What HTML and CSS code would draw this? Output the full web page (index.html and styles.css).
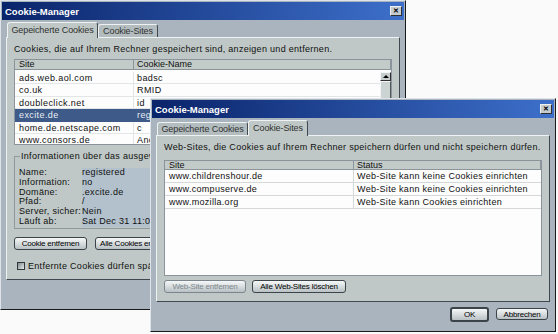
FILE: index.html
```html
<!DOCTYPE html>
<html lang="de">
<head>
    <meta charset="UTF-8">
    <title>Cookie-Manager</title>
    <link rel="stylesheet" href="styles.css">
</head>
<body>
    <div class="desktop">
        <!-- back window: stored cookies -->
        <div class="window back">
            <div class="titlebar">
                <span class="title">Cookie-Manager</span>
                <span class="close">&#10005;</span>
            </div>
            <div class="tabs">
                <div class="tab active">Gepeicherte Cookies</div>
                <div class="tab">Cookie-Sites</div>
            </div>
            <div class="panel">
                <p class="desc">Cookies, die auf Ihrem Rechner gespeichert sind, anzeigen und entfernen.</p>
                <div class="list list-cookies">
                    <div class="list-head">
                        <span class="col-a">Site</span>
                        <span class="col-b">Cookie-Name</span>
                    </div>
                    <div class="list-body">
                        <div class="rows">
                            <div class="row"><span class="col-a">ads.web.aol.com</span><span class="col-b">badsc</span></div>
                            <div class="row"><span class="col-a">co.uk</span><span class="col-b">RMID</span></div>
                            <div class="row"><span class="col-a">doubleclick.net</span><span class="col-b">id</span></div>
                            <div class="row selected"><span class="col-a">excite.de</span><span class="col-b">reg</span></div>
                            <div class="row"><span class="col-a">home.de.netscape.com</span><span class="col-b">c</span></div>
                            <div class="row"><span class="col-a">www.consors.de</span><span class="col-b">Anon</span></div>
                        </div>
                        <div class="scrollbar">
                            <div class="scroll-btn"></div>
                            <div class="scroll-thumb"></div>
                        </div>
                    </div>
                </div>
                <fieldset class="info">
                    <legend>Informationen über das ausgewählte Cookie</legend>
                    <div class="info-grid">
                        <span>Name:</span><span class="val">registered</span>
                        <span>Information:</span><span class="val">no</span>
                        <span>Domäne:</span><span class="val">.excite.de</span>
                        <span>Pfad:</span><span class="val">/</span>
                        <span>Server, sicher:</span><span class="val">Nein</span>
                        <span>Läuft ab:</span><span class="val">Sat Dec 31 11:00:00 2005</span>
                    </div>
                </fieldset>
                <div class="btn-row">
                    <button class="btn w74">Cookie entfernen</button>
                    <button class="btn">Alle Cookies entfernen</button>
                </div>
                <label class="check"><span class="box"></span>Entfernte Cookies dürfen später keine neuen setzen</label>
            </div>
            <div class="footer"></div>
        </div>

        <!-- front window: cookie sites -->
        <div class="window front">
            <div class="titlebar">
                <span class="title">Cookie-Manager</span>
                <span class="close">&#10005;</span>
            </div>
            <div class="tabs">
                <div class="tab">Gepeicherte Cookies</div>
                <div class="tab active">Cookie-Sites</div>
            </div>
            <div class="panel">
                <p class="desc">Web-Sites, die Cookies auf Ihrem Rechner speichern dürfen und nicht speichern dürfen.</p>
                <div class="list list-sites">
                    <div class="list-head">
                        <span class="col-a">Site</span>
                        <span class="col-b">Status</span>
                    </div>
                    <div class="list-body">
                        <div class="rows">
                            <div class="row"><span class="col-a">www.childrenshour.de</span><span class="col-b">Web-Site kann keine Cookies einrichten</span></div>
                            <div class="row"><span class="col-a">www.compuserve.de</span><span class="col-b">Web-Site kann keine Cookies einrichten</span></div>
                            <div class="row"><span class="col-a">www.mozilla.org</span><span class="col-b">Web-Site kann Cookies einrichten</span></div>
                        </div>
                    </div>
                </div>
                <div class="btn-row">
                    <button class="btn w82" disabled>Web-Site entfernen</button>
                    <button class="btn w94">Alle Web-Sites löschen</button>
                </div>
            </div>
            <div class="footer">
                <button class="btn ok">OK</button>
                <button class="btn cancel">Abbrechen</button>
            </div>
        </div>
    </div>
</body>
</html>
```

FILE: styles.css
```css
* {
    box-sizing: border-box;
}
body {
    margin: 0;
    background: #fafafa;
    font-family: "Liberation Sans", Arial, sans-serif;
    font-size: 9px;
    color: #101010;
}
.desktop {
    position: relative;
    width: 558px;
    height: 334px;
    overflow: hidden;
}
.window {
    position: absolute;
    display: flex;
    flex-direction: column;
    padding: 1px;
    background: #a9b4be;
    border: 1px solid;
    border-color: #dde3e8 #1a1a1a #1a1a1a #dde3e8;
}
.back {
    left: 0;
    top: 0;
    width: 406px;
    height: 310px;
}
.front {
    left: 150px;
    top: 98px;
    width: 406px;
    height: 234px;
}
.titlebar {
    height: 18px;
    display: flex;
    align-items: center;
    justify-content: space-between;
    padding: 0 2px 0 3px;
    background: linear-gradient(to right, #0a246a, #3d6fca);
}
.title {
    color: #fff;
    font-weight: bold;
    font-size: 9.5px;
}
.close {
    width: 12px;
    height: 10px;
    display: flex;
    align-items: center;
    justify-content: center;
    background: #c4ccd0;
    border: 1px solid;
    border-color: #f0f0f0 #303030 #303030 #f0f0f0;
    font-size: 7px;
    font-weight: bold;
    color: #000;
}
.tabs {
    display: flex;
    align-items: flex-end;
    height: 17px;
    padding-left: 5px;
}
.tab {
    height: 13px;
    line-height: 12px;
    text-align: center;
    white-space: nowrap;
    background: #b3bdbf;
    border: 1px solid #eef2f2;
    border-right-color: #404850;
    border-bottom: none;
    border-radius: 3px 3px 0 0;
    color: #303030;
    letter-spacing: -0.1px;
}
.tab:first-child { width: 91px; }
.tab:last-child { width: 60px; }
.tab.active {
    height: 16px;
    line-height: 15px;
    background: #bfc8c6;
    margin-bottom: -1px;
    position: relative;
    z-index: 1;
}
.panel {
    height: 243px;
    margin: 0 4px;
    padding: 6px 7px 0;
    background: #bfc8c6;
    border: 1px solid;
    border-color: #eef2f2 #404850 #404850 #eef2f2;
}
.front .panel {
    height: 167px;
}
.desc {
    margin: 0 0 5px;
    line-height: 10px;
    white-space: nowrap;
    letter-spacing: 0.3px;
}
.front .desc {
    margin-bottom: 8px;
}
.list {
    background: #fdfdfd;
    border: 1px solid #8a949a;
    display: flex;
    flex-direction: column;
    overflow: hidden;
}
.list-cookies {
    height: 86px;
}
.list-sites {
    height: 116px;
}
.list-head {
    display: flex;
    height: 10px;
    line-height: 9px;
    background: #c3cbc8;
    border-bottom: 1px solid #8a949a;
}
.list-head span {
    border-right: 1px solid #8a949a;
}
.list-sites .list-head {
    height: 9px;
    line-height: 8px;
}
.col-a {
    width: 119px;
    flex: none;
    padding-left: 4px;
    white-space: nowrap;
    overflow: hidden;
}
.col-b {
    flex: 1;
    padding-left: 3px;
    white-space: nowrap;
    overflow: hidden;
}
.list-sites .col-a {
    width: 189px;
}
.list-body {
    flex: 1;
    display: flex;
    min-height: 0;
}
.rows {
    flex: 1;
    padding-top: 2px;
    letter-spacing: 0.4px;
}
.row {
    display: flex;
    height: 12.4px;
    line-height: 12px;
    border-bottom: 1px solid #e2e6e6;
}
.row .col-a {
    border-right: 1px solid #e2e6e6;
}
.list-sites .rows {
    padding-top: 0;
    letter-spacing: 0.3px;
}
.list-sites .row {
    height: 13px;
    line-height: 13px;
    border-bottom-color: #d4d8d8;
}
.list-sites .row .col-a {
    border-right-color: #d4d8d8;
}
.row.selected {
    background: #3d5a88;
    color: #e8eef4;
    border-bottom-color: #3d5a88;
}
.row.selected .col-a {
    border-right-color: #3d5a88;
}
.scrollbar {
    width: 11px;
    margin-top: 2px;
    display: flex;
    flex-direction: column;
    background: #dfe3e3;
}
.scroll-btn {
    height: 9px;
    background: #c6cece;
    border: 1px solid;
    border-color: #f4f4f4 #303030 #303030 #f4f4f4;
    position: relative;
}
.scroll-btn::after {
    content: "";
    position: absolute;
    left: 2px;
    top: 2px;
    border-left: 3px solid transparent;
    border-right: 3px solid transparent;
    border-bottom: 3px solid #000;
}
.scroll-thumb {
    height: 40px;
    background: #ccd3d3;
    border: 1px solid;
    border-color: #f4f4f4 #505858 #505858 #f4f4f4;
}
.info {
    margin: 6px 0 0;
    padding: 0 0 3px 4px;
    height: 78px;
    border: 1px solid #909a9e;
}
.info legend {
    padding: 0 1px;
    margin-left: 1px;
    line-height: 10px;
    letter-spacing: 0.3px;
}
.info-grid {
    display: grid;
    grid-template-columns: 63px 1fr;
    margin-top: 7px;
    line-height: 9.8px;
    letter-spacing: 0.3px;
}
.info-grid .val {
    background: #b3c1cc;
}
.btn-row {
    display: flex;
    gap: 8px;
    margin-top: 8px;
}
.front .btn-row {
    margin-top: 4px;
    gap: 6px;
}
.btn {
    height: 13px;
    padding: 0 4px;
    font-family: "Liberation Sans", Arial, sans-serif;
    font-size: 8px;
    letter-spacing: -0.2px;
    color: #000;
    background: linear-gradient(#f6f8f8, #b9c1c4);
    border: 1px solid #3c444a;
    border-radius: 3px;
    white-space: nowrap;
}
.btn:disabled {
    color: #7c868c;
    border-color: #7c868c;
}
.w74 { width: 73px; }
.w82 { width: 82px; }
.w94 { width: 94px; }
.check {
    display: flex;
    align-items: center;
    gap: 3px;
    margin: 11px 0 0 3px;
    line-height: 10px;
    letter-spacing: 0.3px;
    white-space: nowrap;
}
.box {
    width: 8px;
    height: 8px;
    border: 1px solid #30363a;
    background: linear-gradient(135deg, #7f888e, #e8ecec);
}
.footer {
    flex: 1;
    display: flex;
    justify-content: flex-end;
    align-items: center;
    gap: 7px;
    padding: 0 6px 4px 0;
}
.ok {
    width: 39px;
    height: 15px;
    border-width: 2px;
}
.cancel {
    width: 52px;
    height: 12px;
}
```
